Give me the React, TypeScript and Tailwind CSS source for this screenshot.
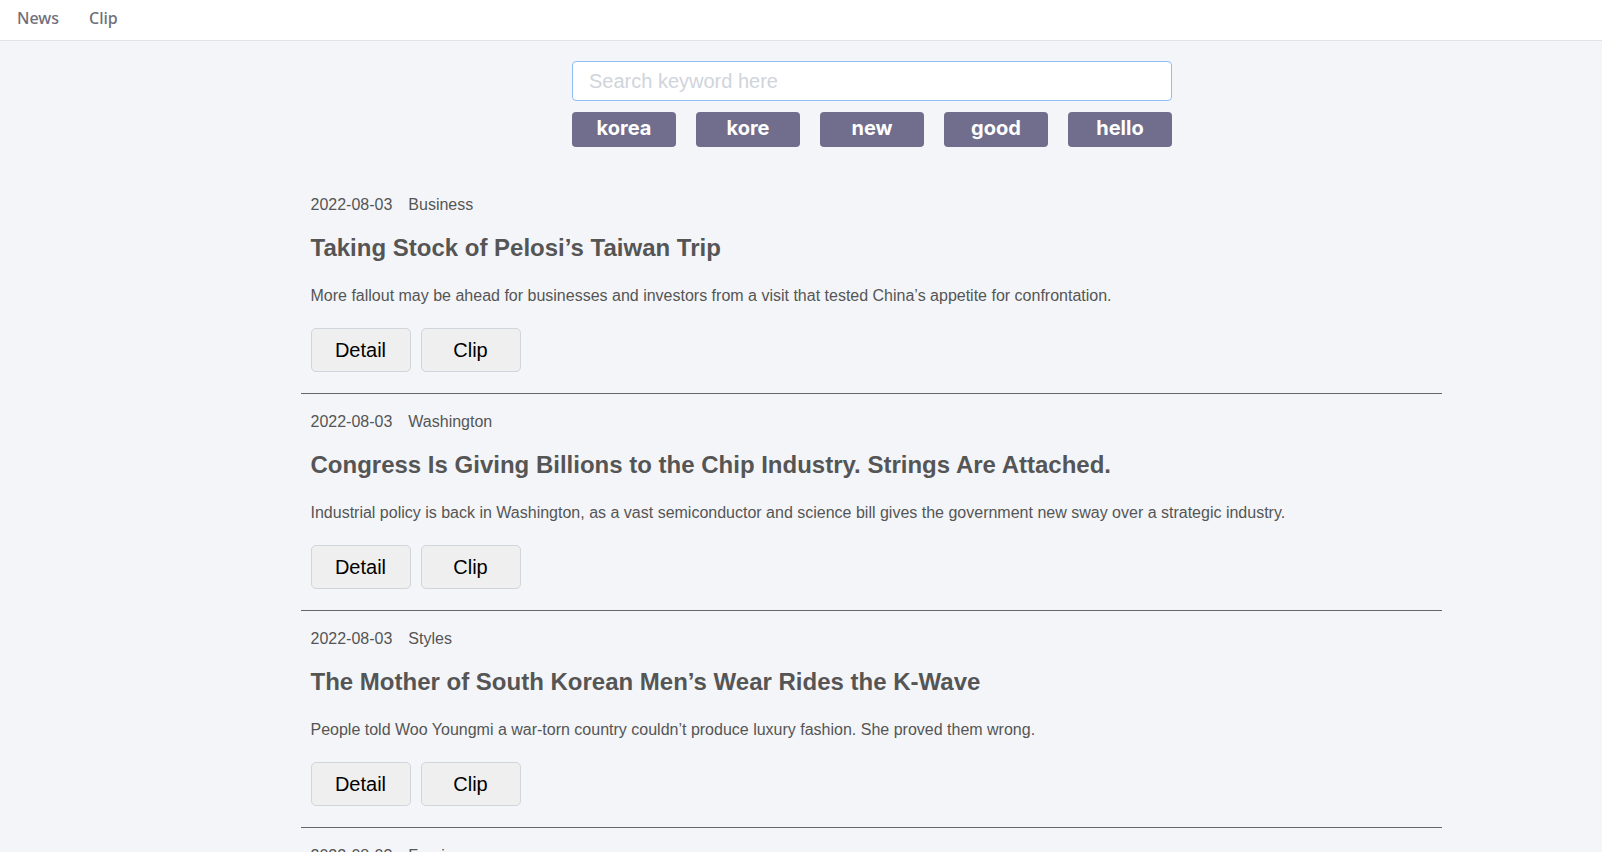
import { useState } from 'react'

type Article = {
  date: string
  section: string
  title: string
  summary: string
}

const keywords = ['korea', 'kore', 'new', 'good', 'hello']

const articles: Article[] = [
  {
    date: '2022-08-03',
    section: 'Business',
    title: 'Taking Stock of Pelosi’s Taiwan Trip',
    summary: 'More fallout may be ahead for businesses and investors from a visit that tested China’s appetite for confrontation.',
  },
  {
    date: '2022-08-03',
    section: 'Washington',
    title: 'Congress Is Giving Billions to the Chip Industry. Strings Are Attached.',
    summary:
      'Industrial policy is back in Washington, as a vast semiconductor and science bill gives the government new sway over a strategic industry.',
  },
  {
    date: '2022-08-03',
    section: 'Styles',
    title: 'The Mother of South Korean Men’s Wear Rides the K-Wave',
    summary: 'People told Woo Youngmi a war-torn country couldn’t produce luxury fashion. She proved them wrong.',
  },
  {
    date: '2022-08-03',
    section: 'Foreign',
    title: 'South Korea’s President Declines to Meet Pelosi in Person',
    summary: 'The decision was seen as an effort to avoid angering China, South Korea’s largest trading partner.',
  },
]

const NavBar = () => (
  <nav className="flex h-[41px] items-start gap-[30px] border-b border-[#e1e3e8] bg-white pl-[17px] pt-[6px] font-['Noto_Sans',sans-serif] text-[16px] font-medium leading-normal text-[#6f6f7a]">
    <a href="#" className="block">
      News
    </a>
    <a href="#" className="block">
      Clip
    </a>
  </nav>
)

const SearchBox = () => {
  const [query, setQuery] = useState('')

  return (
    <div className="mx-auto mt-5 w-[600px]">
      <input
        type="text"
        value={query}
        onChange={(event) => setQuery(event.target.value)}
        placeholder="Search keyword here"
        className="block h-10 w-full rounded-[4px] border border-[#8cbff5] bg-white px-4 font-['Liberation_Sans',Arial,sans-serif] text-[20px] text-[#333] outline-none placeholder:text-[#d0d4db]"
      />
      <div className="mt-[11px] flex justify-between">
        {keywords.map((word) => (
          <button
            key={word}
            type="button"
            onClick={() => setQuery(word)}
            className="h-[35px] w-[104px] rounded-[4px] bg-[#706e8c] pb-[4px] font-['Inter',sans-serif] text-[20px] font-bold leading-none text-white"
          >
            {word}
          </button>
        ))}
      </div>
    </div>
  )
}

const ArticleItem = ({ article }: { article: Article }) => (
  <li className="border-b border-[#666] px-[10px] pb-[21px] pt-[19px] first:pt-0">
    <p className="flex gap-[16px] text-[16px] leading-[18px] text-[#555]">
      <span>{article.date}</span>
      <span>{article.section}</span>
    </p>
    <h2 className="mt-[20px] text-[24px] font-bold leading-[28px] text-[#555]">{article.title}</h2>
    <p className="mt-[25px] text-[16px] leading-[18px] text-[#555]">{article.summary}</p>
    <div className="mt-[23px] flex gap-[10px]">
      <button
        type="button"
        className="h-[44px] w-[100px] rounded-[5px] border border-[#d0d4db] bg-[#efefef] text-[20px] text-black"
      >
        Detail
      </button>
      <button
        type="button"
        className="h-[44px] w-[100px] rounded-[5px] border border-[#d0d4db] bg-[#efefef] text-[20px] text-black"
      >
        Clip
      </button>
    </div>
  </li>
)

export default function App() {
  return (
    <div className="h-screen overflow-hidden bg-[#f4f5f9] font-['Liberation_Sans',Arial,sans-serif]">
      <NavBar />
      <main className="pl-[140px]">
        <div className="pl-[2px]">
          <SearchBox />
        </div>
        <ul className="mx-auto mt-[49px] w-[1141px]">
          {articles.map((article) => (
            <ArticleItem key={article.title} article={article} />
          ))}
        </ul>
      </main>
    </div>
  )
}
